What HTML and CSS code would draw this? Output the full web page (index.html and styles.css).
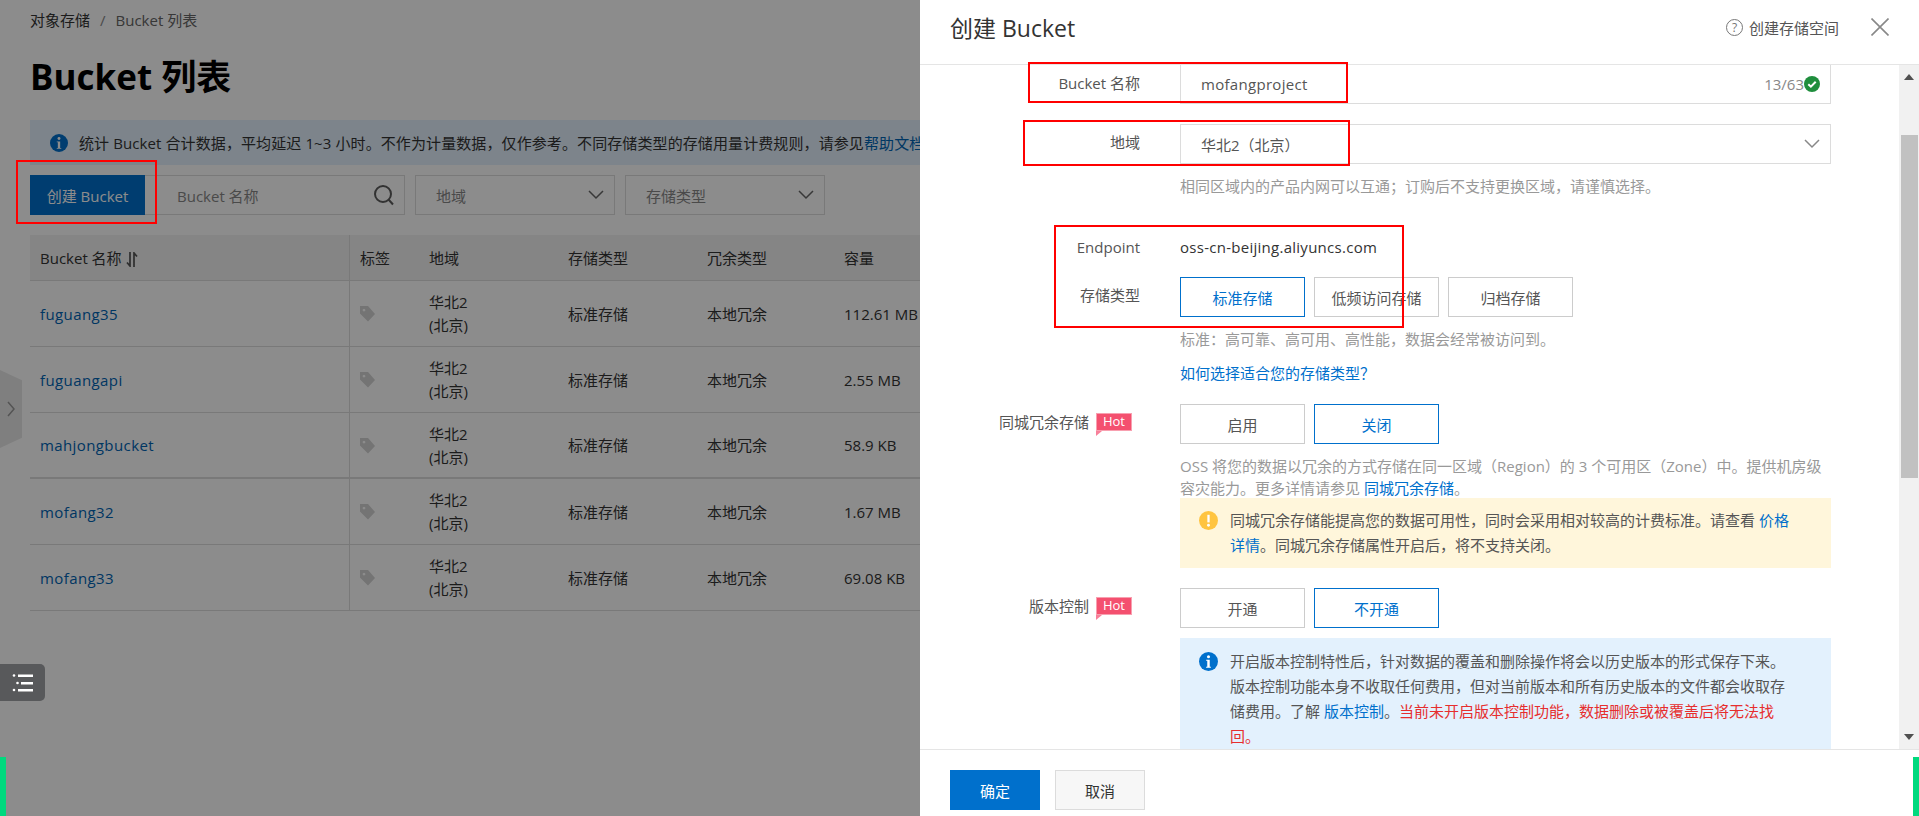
FILE: index.html
```html
<!DOCTYPE html>
<html lang="zh-CN">
<head>
  <meta charset="UTF-8" />
  <title>Bucket 列表</title>
  <link rel="stylesheet" href="styles.css">
</head>
<body>
  <svg class="defs" width="0" height="0">
    <symbol id="tag" viewBox="0 0 15 16"><path fill-rule="evenodd" d="M0 0H8L15 8 8 15.500 0 7.500ZM4 2.700a1.400 1.400 0 1 0 .01 0Z"/></symbol>
    <symbol id="chevron" viewBox="0 0 16 10"><path d="M1 1l7 7 7-7" fill="none" stroke="currentColor" stroke-width="1.500"/></symbol>
    <symbol id="info" viewBox="0 0 20 20"><circle cx="10" cy="10" r="10" fill="currentColor"/><circle cx="10" cy="5" r="1.600" fill="#fff"/><path d="M7.500 8.200h3.800v7.300h1.200v1H7.500v-1h1.200V9.200H7.500z" fill="#fff"/></symbol>
  </svg>

  <div class="page">
    <div class="crumbs"><span class="crumb-root">对象存储</span><span class="crumb-sep">/</span><span>Bucket 列表</span></div>
    <h1 class="page-title">Bucket 列表</h1>
    <div class="notice">
      <svg class="notice-icon"><use href="#info"/></svg>
      <span>统计 Bucket 合计数据，平均延迟 1~3 小时。不作为计量数据，仅作参考。不同存储类型的存储用量计费规则，请参见<a class="notice-link">帮助文档</a>。</span>
    </div>
    <div class="toolbar">
      <button class="create-btn">创建 Bucket</button>
      <div class="filter search">
        <span>Bucket 名称</span>
        <svg width="22" height="22" viewBox="0 0 22 22" fill="none" stroke="#5c5c5c" stroke-width="2"><circle cx="10" cy="10" r="8"/><path d="M15.500 15.500 20 20.500"/></svg>
      </div>
      <div class="filter select"><span>地域</span><svg width="16" height="10"><use href="#chevron"/></svg></div>
      <div class="filter select"><span>存储类型</span><svg width="16" height="10"><use href="#chevron"/></svg></div>
    </div>
    <table class="bucket-table">
      <thead>
        <tr>
          <th class="col-name">Bucket 名称 <svg class="sort" width="12" height="15" viewBox="0 0 12 15" fill="none" stroke="#555" stroke-width="1.700"><path d="M4 0v14L1 10.500M8 15V1l3 3.500"/></svg></th>
          <th class="col-tag">标签</th><th>地域</th><th>存储类型</th><th class="col-redund">冗余类型</th><th>容量</th>
        </tr>
      </thead>
      <tbody>
        <tr><td class="col-name"><a class="link">fuguang35</a></td><td class="col-tag"><svg class="tag"><use href="#tag"/></svg></td><td>华北2<br>(北京)</td><td>标准存储</td><td>本地冗余</td><td>112.61 MB</td></tr>
        <tr><td class="col-name"><a class="link">fuguangapi</a></td><td class="col-tag"><svg class="tag"><use href="#tag"/></svg></td><td>华北2<br>(北京)</td><td>标准存储</td><td>本地冗余</td><td>2.55 MB</td></tr>
        <tr class="row-thick"><td class="col-name"><a class="link">mahjongbucket</a></td><td class="col-tag"><svg class="tag"><use href="#tag"/></svg></td><td>华北2<br>(北京)</td><td>标准存储</td><td>本地冗余</td><td>58.9 KB</td></tr>
        <tr><td class="col-name"><a class="link">mofang32</a></td><td class="col-tag"><svg class="tag"><use href="#tag"/></svg></td><td>华北2<br>(北京)</td><td>标准存储</td><td>本地冗余</td><td>1.67 MB</td></tr>
        <tr><td class="col-name"><a class="link">mofang33</a></td><td class="col-tag"><svg class="tag"><use href="#tag"/></svg></td><td>华北2<br>(北京)</td><td>标准存储</td><td>本地冗余</td><td>69.08 KB</td></tr>
      </tbody>
    </table>
  </div>

  <div class="side-tab"><svg width="8" height="16" viewBox="0 0 8 16" fill="none" stroke="#999" stroke-width="1.500"><path d="M1 1l6 7-6 7"/></svg></div>
  <div class="mask"></div>
  <div class="list-btn">
    <svg width="22" height="20" viewBox="0 0 22 20" fill="#fff"><circle cx="2" cy="2.500" r="1.300"/><rect x="6" y="1.500" width="15" height="2.500"/><circle cx="5.500" cy="10" r="1.300"/><rect x="9" y="9" width="12" height="2.500"/><circle cx="2" cy="17" r="1.300"/><rect x="6" y="16" width="15" height="2.500"/></svg>
  </div>
  <div class="edge-bar edge-left"></div>

  <aside class="drawer">
    <header class="drawer-head">
      <h2 class="drawer-title">创建 Bucket</h2>
      <div class="drawer-help"><span class="help-dot">?</span><span>创建存储空间</span></div>
      <svg class="close" width="18" height="18" viewBox="0 0 18 18" stroke="#888" stroke-width="1.600"><path d="M0.500 0.500l17 17M17.500 0.500l-17 17"/></svg>
    </header>

    <div class="drawer-body">
      <form class="form">
        <div class="row row-name">
          <label class="row-label">Bucket 名称</label>
          <div class="field">
            <div class="input"><span class="input-text">mofangproject</span><span class="count">13/63</span>
              <svg class="ok" width="16" height="16" viewBox="0 0 16 16"><circle cx="8" cy="8" r="8" fill="#1f8e3d"/><path d="M4.300 8.200l2.600 2.500 4.800-5" fill="none" stroke="#fff" stroke-width="2"/></svg>
            </div>
          </div>
        </div>

        <div class="row row-region">
          <label class="row-label">地域</label>
          <div class="field">
            <div class="input"><span class="input-text">华北2（北京）</span><svg class="input-arrow" width="16" height="10"><use href="#chevron"/></svg></div>
            <p class="hint hint-region">相同区域内的产品内网可以互通；订购后不支持更换区域，请谨慎选择。</p>
          </div>
        </div>

        <div class="row row-endpoint">
          <label class="row-label">Endpoint</label>
          <div class="field endpoint">oss-cn-beijing.aliyuncs.com</div>
        </div>

        <div class="row row-storage">
          <label class="row-label">存储类型</label>
          <div class="field">
            <div class="choices"><span class="choice on">标准存储</span><span class="choice">低频访问存储</span><span class="choice">归档存储</span></div>
            <p class="hint hint-storage">标准：高可靠、高可用、高性能，数据会经常被访问到。</p>
            <p class="how"><a class="link-bright">如何选择适合您的存储类型？</a></p>
          </div>
        </div>

        <div class="row row-zone">
          <label class="row-label">同城冗余存储<span class="hot">Hot</span></label>
          <div class="field">
            <div class="choices"><span class="choice">启用</span><span class="choice on">关闭</span></div>
            <p class="hint hint-zone">OSS 将您的数据以冗余的方式存储在同一区域（Region）的 3 个可用区（Zone）中。提供机房级容灾能力。更多详情请参见 <a class="link-bright">同城冗余存储</a>。</p>
            <div class="alert alert-warn">
              <svg class="alert-icon" width="19" height="19" viewBox="0 0 20 20"><circle cx="10" cy="10" r="10" fill="#ffc440"/><rect x="8.800" y="4" width="2.400" height="8" fill="#fff"/><circle cx="10" cy="15" r="1.500" fill="#fff"/></svg>
              <p>同城冗余存储能提高您的数据可用性，同时会采用相对较高的计费标准。请查看 <a class="link-bright">价格详情</a>。同城冗余存储属性开启后，将不支持关闭。</p>
            </div>
          </div>
        </div>

        <div class="row row-version">
          <label class="row-label">版本控制<span class="hot">Hot</span></label>
          <div class="field">
            <div class="choices"><span class="choice">开通</span><span class="choice on">不开通</span></div>
            <div class="alert alert-info">
              <svg class="alert-icon info-blue" width="19" height="19"><use href="#info"/></svg>
              <p>开启版本控制特性后，针对数据的覆盖和删除操作将会以历史版本的形式保存下来。版本控制功能本身不收取任何费用，但对当前版本和所有历史版本的文件都会收取存储费用。了解 <a class="link-bright">版本控制</a>。<span class="danger">当前未开启版本控制功能，数据删除或被覆盖后将无法找回。</span></p>
            </div>
          </div>
        </div>
      </form>
      <div class="scrollbar">
        <span class="arrow-up"></span>
        <span class="thumb"></span>
        <span class="arrow-down"></span>
      </div>
    </div>

    <footer class="drawer-foot">
      <button class="btn-ok">确定</button>
      <button class="btn-cancel">取消</button>
    </footer>
  </aside>

  <div class="edge-bar edge-right"></div>

  <!-- red marks drawn on the screenshot -->
  <div class="mark mark-create"></div>
  <div class="mark mark-name"></div>
  <div class="mark mark-region"></div>
  <div class="mark mark-endpoint"></div>
</body>
</html>
```

FILE: styles.css
```css
* {
  box-sizing: border-box;
}

html, body {
  margin: 0;
  height: 816px;
  overflow: hidden;
}

body {
  position: relative;
  background: #fff;
  color: #333;
  font-family: "Open Sans", "Noto Sans CJK SC", sans-serif;
  font-size: 15px;
}

p {
  margin: 0;
}

.defs {
  position: absolute;
}

.page {
  width: 920px;
  height: 816px;
  padding: 10px 0 0 30px;
  overflow: hidden;
}

.crumbs {
  height: 20px;
  line-height: 20px;
  color: #666;
}

.crumb-root {
  color: #333;
}

.crumb-sep {
  margin: 0 10px;
  color: #888;
}

.page-title {
  margin: 22px 0 0;
  height: 50px;
  line-height: 50px;
  font-size: 35px;
  font-weight: 700;
  color: #000;
}

.notice {
  display: flex;
  align-items: center;
  width: 1000px;
  height: 45px;
  margin-top: 18px;
  padding-left: 20px;
  background: #e3f1fd;
  letter-spacing: 0.1px;
  white-space: nowrap;
}

.notice-icon {
  width: 18px;
  height: 18px;
  margin-right: 11px;
  color: #0070cc;
}

.notice-link {
  color: #0064b4;
}

.link {
  color: #0064b4;
  letter-spacing: 0.4px;
}

.toolbar {
  display: flex;
  height: 40px;
  margin-top: 10px;
}

.create-btn {
  width: 115px;
  height: 40px;
  border: none;
  background: #0070cc;
  color: #fff;
  font: inherit;
}

.filter {
  display: flex;
  align-items: center;
  justify-content: space-between;
  height: 40px;
  border: 1px solid #dcdcdc;
  color: #888;
}

.search {
  width: 260px;
  padding: 0 9px 0 32px;
  border-left: none;
}

.select {
  width: 200px;
  margin-left: 10px;
  padding: 0 10px 0 20px;
}

.select svg {
  color: #666;
}

.bucket-table {
  width: 943px;
  margin-top: 20px;
  table-layout: fixed;
  border-collapse: separate;
  border-spacing: 0;
}

.bucket-table th {
  height: 46px;
  padding: 0 10px;
  background: #f2f2f2;
  border-bottom: 1px solid #dcdcdc;
  font-weight: 400;
  text-align: left;
}

.bucket-table td {
  height: 66px;
  padding: 1px 10px 0;
  border-bottom: 1px solid #dcdcdc;
  line-height: 23px;
}

.bucket-table th,
.bucket-table td {
  width: 139px;
}

.bucket-table .col-name {
  width: 320px;
  border-right: 1px solid #dcdcdc;
}

.bucket-table .col-tag {
  width: 69px;
}

.bucket-table .col-redund {
  width: 137px;
}

.row-thick td {
  border-bottom-width: 2px;
}

.sort {
  vertical-align: -3px;
}

.tag {
  display: block;
  width: 15px;
  height: 16px;
  fill: #d3d3d3;
}

.side-tab {
  position: absolute;
  left: 0;
  top: 370px;
  display: flex;
  align-items: center;
  justify-content: center;
  width: 22px;
  height: 78px;
  background: #e8e8e8;
  clip-path: polygon(0 0, 100% 13%, 100% 87%, 0 100%);
}

.mask {
  position: absolute;
  inset: 0;
  background: rgba(0, 0, 0, 0.45);
}

.list-btn {
  position: absolute;
  left: 0;
  top: 664px;
  display: flex;
  align-items: center;
  justify-content: center;
  width: 45px;
  height: 37px;
  border-radius: 0 5px 5px 0;
  background: #58595b;
}

.edge-bar {
  position: absolute;
  bottom: 0;
  width: 6px;
  height: 59px;
  background: #00d97e;
}

.edge-left {
  left: 0;
}

.edge-right {
  right: 0;
}

.drawer {
  position: absolute;
  top: 0;
  right: 0;
  display: flex;
  flex-direction: column;
  width: 999px;
  height: 816px;
  background: #fff;
}

.drawer-head {
  display: flex;
  align-items: center;
  height: 65px;
  padding: 0 30px;
  border-bottom: 1px solid #e5e5e5;
}

.drawer-title {
  flex: 1;
  margin: 0 0 10px;
  font-size: 23px;
  font-weight: 400;
  color: #333;
}

.drawer-help {
  display: flex;
  align-items: center;
  gap: 6px;
  margin-bottom: 10px;
  color: #555;
}

.help-dot {
  display: flex;
  align-items: center;
  justify-content: center;
  width: 17px;
  height: 17px;
  border: 1px solid #777;
  border-radius: 50%;
  font-size: 12px;
  color: #777;
}

.close {
  margin: 0 0 10px 32px;
}

.drawer-body {
  display: flex;
  flex: 1;
  min-height: 0;
}

.form {
  flex: 1;
  min-width: 0;
  overflow: hidden;
}

.scrollbar {
  display: flex;
  flex-direction: column;
  align-items: center;
  width: 20px;
  background: #f1f1f1;
}

.arrow-up {
  margin-top: 9px;
  border: 5px solid transparent;
  border-top: none;
  border-bottom: 6px solid #505050;
}

.thumb {
  width: 17px;
  height: 343px;
  margin-top: 55px;
  background: #c1c1c1;
}

.arrow-down {
  margin-top: auto;
  margin-bottom: 9px;
  border: 5px solid transparent;
  border-bottom: none;
  border-top: 6px solid #505050;
}

.row {
  display: flex;
}

.row-label {
  display: block;
  flex: none;
  width: 260px;
  padding-right: 40px;
  line-height: 36px;
  text-align: right;
  color: #555;
}

.field {
  flex: none;
  width: 651px;
}

.input {
  display: flex;
  align-items: center;
  height: 40px;
  padding: 0 10px 0 20px;
  border: 1px solid #dcdcdc;
  color: #555;
}

.input-text {
  flex: 1;
}

.input-arrow {
  color: #888;
}

.count {
  color: #888;
}

.row-name .input {
  height: 39px;
  border-top: none;
}

.row-name .input-text {
  letter-spacing: 0.3px;
}

.row-region {
  margin-top: 20px;
}

.hint {
  color: #999;
  line-height: 22px;
}

.hint-region {
  margin-top: 11px;
}

.row-endpoint {
  margin-top: 32px;
}

.endpoint {
  line-height: 36px;
  letter-spacing: 0.27px;
}

.row-storage {
  margin-top: 12px;
}

.choices {
  display: flex;
  gap: 9px;
}

.choice {
  display: flex;
  align-items: center;
  justify-content: center;
  width: 125px;
  height: 40px;
  border: 1px solid #ccc;
  color: #555;
}

.choice.on {
  border-color: #0070cc;
  color: #0070cc;
}

.hint-storage {
  margin-top: 11px;
}

.how {
  margin-top: 12px;
  line-height: 22px;
}

.link-bright {
  color: #0070cc;
}

.row-zone {
  margin-top: 20px;
}

.hot {
  position: relative;
  display: inline-block;
  width: 36px;
  height: 18px;
  margin: 0 8px 0 7px;
  background: #f4506f;
  box-shadow: 0 0 0 1px #f8a0b0 inset;
  vertical-align: 2px;
  line-height: 17px;
  text-align: center;
  font-size: 13px;
  color: #fff;
}

.hot::after {
  content: "";
  position: absolute;
  left: 0;
  top: 100%;
  border-top: 5px solid #f8809a;
  border-right: 6px solid transparent;
}

.hint-zone {
  margin-top: 11px;
}

.alert {
  display: flex;
  gap: 12px;
  padding: 10px 42px 10px 19px;
  line-height: 25px;
  color: #555;
}

.alert-warn {
  height: 70px;
  margin-top: -1px;
  background: #fff6db;
}

.alert-info {
  height: 130px;
  margin-top: 10px;
  padding-top: 11px;
  background: #e3f1fd;
}

.alert-icon {
  flex: none;
  margin-top: 3px;
}

.info-blue {
  color: #0070cc;
}

.danger {
  color: #e62e2e;
}

.row-version {
  margin-top: 20px;
}

.drawer-foot {
  display: flex;
  gap: 15px;
  height: 67px;
  padding: 20px 0 0 30px;
  border-top: 1px solid #e5e5e5;
  background: #fff;
}

.drawer-foot button {
  width: 90px;
  height: 40px;
  font: inherit;
}

.btn-ok {
  border: none;
  background: #0070cc;
  color: #fff;
}

.btn-cancel {
  border: 1px solid #dcdcdc;
  background: #f7f7f7;
  color: #333;
}

.mark {
  position: absolute;
  border: 2px solid #f00;
}

.mark-create {
  left: 16px;
  top: 160px;
  width: 141px;
  height: 64px;
}

.mark-name {
  left: 1028px;
  top: 62px;
  width: 320px;
  height: 41px;
}

.mark-region {
  left: 1023px;
  top: 120px;
  width: 327px;
  height: 46px;
}

.mark-endpoint {
  left: 1054px;
  top: 225px;
  width: 350px;
  height: 103px;
}
```
